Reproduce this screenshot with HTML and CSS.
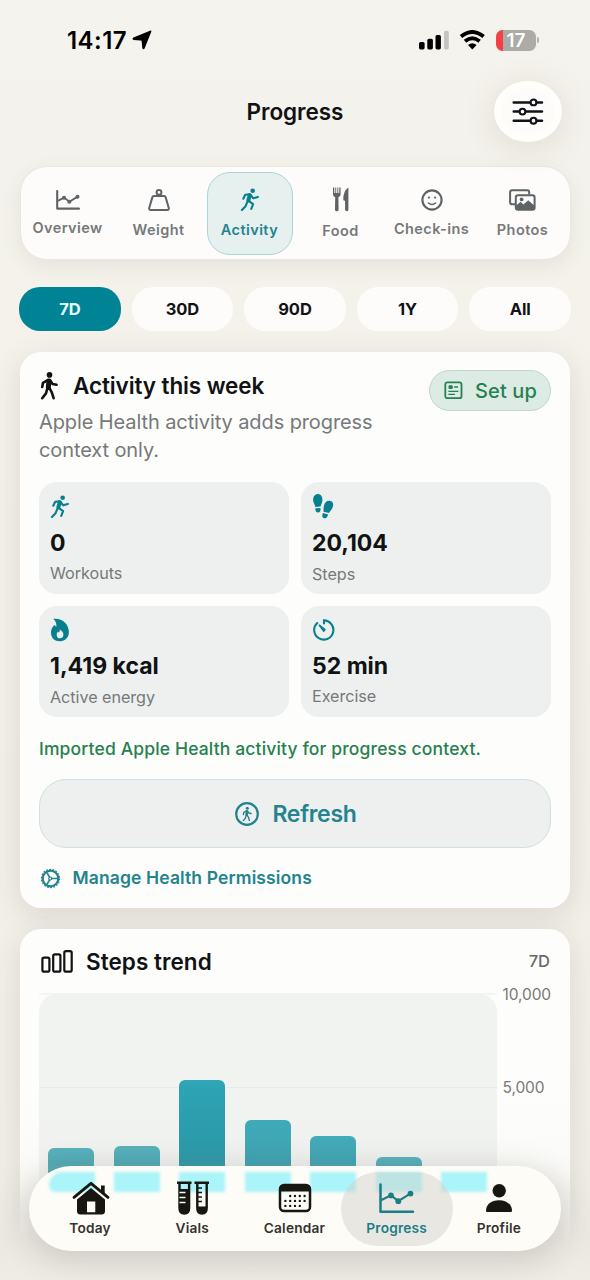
FILE: index.html
```html
<!DOCTYPE html>
<html lang="en">
<head>
<meta charset="utf-8">
<title>Progress</title>
<link rel="stylesheet" href="styles.css">
</head>
<body>
<svg class="defs" width="0" height="0" aria-hidden="true">
  <defs>
    <symbol id="runner" viewBox="0 0 20 24">
      <circle cx="12.8" cy="2.9" r="2.4" fill="currentColor"/>
      <path d="M9.8 7.6L8.2 13" fill="none" stroke="currentColor" stroke-width="4.2" stroke-linecap="round"/>
      <path d="M9.6 6.7L5 7L3 11.2M10.8 7.6L13.4 10.8L18.2 9.3M8.6 13.4L13.2 16.8L11.3 21.9M7 15L5.4 19L1.6 23" fill="none" stroke="currentColor" stroke-width="2.2" stroke-linecap="round" stroke-linejoin="round"/>
    </symbol>
    <symbol id="walker" viewBox="0 0 18 28">
      <circle cx="9.5" cy="2.9" r="2.8" fill="currentColor"/>
      <path d="M9 9L8.4 15" fill="none" stroke="currentColor" stroke-width="5" stroke-linecap="round"/>
      <path d="M8 8L3 10.8L2.2 15M10.4 8.8L12.6 12L16.6 12.8M7.4 16.2L6 21.4L2.2 26.2M9.2 15.6L11.8 20.4L13.6 26.2" fill="none" stroke="currentColor" stroke-width="2.6" stroke-linecap="round" stroke-linejoin="round"/>
    </symbol>
    <symbol id="linechart" viewBox="0 0 24 20">
      <path d="M1.2 1V18.6H23" fill="none" stroke="currentColor" stroke-width="2.1" stroke-linecap="round" stroke-linejoin="round"/>
      <path d="M1.6 11L8 7.6L13.4 11.7L21.6 6.6" fill="none" stroke="currentColor" stroke-width="1.9"/>
      <circle cx="8" cy="7.8" r="2" fill="currentColor"/><circle cx="13.4" cy="11.7" r="2" fill="currentColor"/><circle cx="21.5" cy="6.7" r="2" fill="currentColor"/>
    </symbol>
  </defs>
</svg>
<div class="screen">
  <div class="status">
    <div class="clock"><span>14:17</span>
      <svg width="20" height="20" viewBox="0 0 20 20"><path d="M18 .7Q19.7 .1 19.3 1.8L12.7 18.2Q11.6 20.2 10.3 18.3L9.7 11.4Q9.6 10.5 8.7 10.4L1.6 10Q-.6 9 1.4 7.6Z" fill="#000"/></svg>
    </div>
    <div class="signals">
      <svg width="31" height="20" viewBox="0 0 31 20"><rect x="0" y="12" width="5.6" height="7.4" rx="1.6"/><rect x="8.3" y="8.8" width="5.6" height="10.6" rx="1.6"/><rect x="16.5" y="5" width="5.4" height="14.4" rx="1.6"/><rect x="25" y=".8" width="4.8" height="18.6" rx="1.6" fill="#c5c4be"/></svg>
      <svg class="wifi" width="27" height="20" viewBox="0 0 27 20"><path d="M2 6.6Q13.3 -2.6 24.6 6.6M6 11.3Q13.3 5.3 20.6 11.3" fill="none" stroke="#000" stroke-width="3.9"/><path d="M9 15Q13.3 11.7 17.6 15L13.3 19.4Z"/></svg>
      <div class="battery"><span>17</span></div>
      <i class="battery-cap"></i>
    </div>
  </div>

  <header class="header">
    <h1>Progress</h1>
    <button class="filter" aria-label="Filters">
      <svg width="32" height="27" viewBox="0 0 32 27" fill="none" stroke="#0e1319" stroke-width="2.5" stroke-linecap="round"><path d="M1.7 4.4H18M25 4.4H30M1.7 13.6H7M14 13.6H30M1.7 22.7H18M25 22.7H30"/><circle cx="21.5" cy="4.4" r="2.9" stroke-width="2.1"/><circle cx="10.5" cy="13.6" r="2.9" stroke-width="2.1"/><circle cx="21.5" cy="22.7" r="2.9" stroke-width="2.1"/></svg>
    </button>
  </header>

  <nav class="tabs">
    <div class="tab"><svg class="tab-chart" width="24" height="20"><use href="#linechart"/></svg><span>Overview</span></div>
    <div class="tab weight"><svg width="22" height="22" viewBox="0 0 22 22" fill="none" stroke="currentColor" stroke-width="2" stroke-linejoin="round"><circle cx="11" cy="3.4" r="2.4"/><path d="M4.4 8.1Q4.8 7 6 7H16Q17.2 7 17.6 8.1L20.8 19Q21.1 21 19.3 21H2.7Q.9 21 1.2 19Z"/></svg><span>Weight</span></div>
    <div class="tab active"><svg width="20" height="23"><use href="#runner"/></svg><span>Activity</span></div>
    <div class="tab food"><svg width="18" height="25" viewBox="0 0 18 25" fill="currentColor"><path d="M1 .6V7.2Q1 9.7 3.2 10.3L3 22.4Q3 24.3 4.8 24.3T6.6 22.4L6.4 10.3Q8.6 9.7 8.6 7.2V.6H7.3V6H6.3V.6H5.4V6H4.2V.6H3.3V6H2.3V.6Z"/><path d="M16.4 .6Q11.1 4.2 11.3 12.7Q11.3 13.6 13.1 13.8V22.5Q13.1 24.3 14.8 24.3T16.4 22.5Z"/></svg><span>Food</span></div>
    <div class="tab"><svg width="22" height="22" viewBox="0 0 22 22" fill="none" stroke="currentColor"><circle cx="11" cy="11" r="9.6" stroke-width="2.1"/><path d="M7.4 14Q11 16.8 14.6 14" stroke-width="1.5" stroke-linecap="round"/><circle cx="7.9" cy="8.6" r="1.1" fill="currentColor" stroke="none"/><circle cx="14.1" cy="8.6" r="1.1" fill="currentColor" stroke="none"/></svg><span>Check-ins</span></div>
    <div class="tab photos"><svg width="27" height="22" viewBox="0 0 27 22" fill="none" stroke="currentColor" stroke-width="2"><path d="M6.4 15.3H3.2Q1.1 15.3 1.1 13.2V3.4Q1.1 1.2 3.2 1.2H18.1Q20.2 1.2 20.2 3.4V5.4"/><rect x="6.8" y="6.2" width="18.8" height="14.5" rx="2.3"/><path d="M7.2 16.6L11.6 12.8L14.4 15.5L19.2 11.2L25.2 16.5V20H7.2Z" fill="currentColor" stroke="none"/><circle cx="12.6" cy="10.4" r="1.9" fill="currentColor" stroke="none"/></svg><span>Photos</span></div>
  </nav>

  <div class="ranges">
    <span class="range selected">7D</span><span class="range">30D</span><span class="range">90D</span><span class="range">1Y</span><span class="range">All</span>
  </div>

  <section class="card activity">
    <div class="card-head">
      <div>
        <h2><svg width="18" height="28"><use href="#walker"/></svg><span>Activity this week</span></h2>
        <p class="lead">Apple Health activity adds progress<br>context only.</p>
      </div>
      <button class="setup"><svg width="19" height="19" viewBox="0 0 19 19" fill="none" stroke="currentColor"><rect x="1.3" y="1.4" width="16.2" height="15.8" rx="2" stroke-width="1.8"/><path d="M10.2 6H14M4.4 10.3H14.4M4.4 13.4H11" stroke-width="1.3"/><rect x="4.5" y="4.2" width="4.3" height="3.8" rx="1.2" fill="currentColor" stroke="none"/></svg><span>Set up</span></button>
    </div>
    <div class="tiles">
      <div class="tile"><svg width="20" height="23"><use href="#runner"/></svg><b>0</b><small>Workouts</small></div>
      <div class="tile steps"><svg width="22" height="25" viewBox="0 0 22 25" fill="currentColor"><path d="M5.6 .1C8.6-.1 10.6 2.5 10.4 6.2C10.3 8.6 9.3 9.8 8.6 12.6L3.3 12.9C2.9 10.2 1.2 8.7 1.1 5.9C1 2.7 2.9.4 5.6.1Z"/><path d="M3.3 14.3L8.4 14Q9.1 18.3 6 18.5Q3.2 18.5 3.3 14.3Z"/><path d="M18.6 7C15.4 6 13 8.1 12 11.4C11.3 14 11.7 15.6 11.5 17.7L16.9 19.1C17.8 17.2 19.9 15.6 20.8 13C21.6 10 21 7.7 18.6 7Z"/><path d="M10.9 19L16.2 20.4Q14.7 24.8 12 24.2Q9.2 23.2 10.9 19Z"/></svg><b>20,104</b><small>Steps</small></div>
      <div class="tile energy"><svg width="20" height="24" viewBox="0 0 20 24"><path d="M3.3 .9C12.3-.2 18.8 6.1 18.9 14.1C18.9 19.6 15.4 23.2 10 23.2S1 19.8 1 14.7C1 11.8 2.1 9.3 4.3 7L6.2 8.8C6.9 6 5.7 2.8 3.3.9Z" fill="currentColor"/><path d="M9.7 11.5C12.3 12.9 13.6 14.7 13.4 17.1C13.2 19.2 11.8 20.3 9.9 20.3S6.7 18.9 6.7 16.9C6.7 15.5 7.2 14.5 8 13.6L9 14.8Q9.9 13.4 9.7 11.5Z" fill="#edf0ee"/></svg><b>1,419 kcal</b><small>Active energy</small></div>
      <div class="tile exercise"><svg width="24" height="22" viewBox="0 0 24 22" fill="none" stroke="currentColor" stroke-width="2.1" stroke-linecap="round"><path d="M12 4.4V1.4A9.6 9.6 0 1 1 5.2 4"/><path d="M7.4 6.2L13 10.7L11.6 12.1Z" stroke-width="1.5" fill="currentColor" stroke-linejoin="round"/></svg><b>52 min</b><small>Exercise</small></div>
    </div>
    <p class="note">Imported Apple Health activity for progress context.</p>
    <button class="refresh"><svg width="24" height="24" viewBox="0 0 24 24"><circle cx="12" cy="12" r="10.8" fill="none" stroke="currentColor" stroke-width="2.2"/><use href="#walker" x="7" y="4.6" width="10" height="15"/></svg><span>Refresh</span></button>
    <a class="manage"><svg width="21" height="21" viewBox="0 0 21 21" fill="none" stroke="currentColor"><circle cx="10.5" cy="10.5" r="7.8" stroke-width="2.2"/><circle cx="10.5" cy="10.5" r="9.1" stroke-width="1.1" stroke-dasharray="1.8 1.38"/><path d="M10.5 10.5H18M6.8 4.5L10.5 10.5L6.8 16.5" stroke-width="1.6"/><circle cx="10.2" cy="10.5" r="1.5" fill="#fdfcfb" stroke-width="1.2"/></svg><span>Manage Health Permissions</span></a>
  </section>

  <section class="card trend">
    <div class="trend-head">
      <h2><svg width="32" height="23" viewBox="0 0 32 23" fill="none" stroke="#101214" stroke-width="2.2"><rect x="1.4" y="7.6" width="7" height="14" rx="1.7"/><rect x="12.2" y="4.3" width="7.2" height="17.3" rx="1.7"/><rect x="23.3" y="1.1" width="7.4" height="20.5" rx="1.7"/></svg><span>Steps trend</span></h2>
      <span class="period">7D</span>
    </div>
    <div class="chart">
      <div class="plot">
        <i class="bar" style="height:32px"></i><i class="bar" style="height:34px"></i><i class="bar tall" style="height:100px"></i><i class="bar mid" style="height:60px"></i><i class="bar mid" style="height:44px"></i><i class="bar" style="height:23px"></i><i class="bar" style="height:0"></i>
      </div>
      <div class="axis"><span>10,000</span><span>5,000</span></div>
    </div>
  </section>

  <div class="fade"></div>
  <nav class="dock">
    <div class="glints"><i></i><i></i><i></i><i></i><i></i><i></i><i></i></div>
    <div class="dock-items">
      <div class="dock-item"><svg width="38" height="34" viewBox="0 0 38 34"><path d="M2 16.4L19 2.3L36 16.4" fill="none" stroke="#171611" stroke-width="2.8" stroke-linecap="round" stroke-linejoin="round"/><path d="M29 4.6H32.7V13L29 9.7ZM19 7L33 18.5V30Q33 33.5 29.5 33.5H8.5Q5 33.5 5 30V18.5ZM15 20.5V31.3H23.3V20.5Z" fill="#171611" fill-rule="evenodd"/></svg><span>Today</span></div>
      <div class="dock-item vials"><svg width="34" height="34" viewBox="0 0 34 34"><path d="M1 1.7H15.5M18.5 1.7H33M3.5 1.5V27Q3.5 32.5 8.3 32.5T13.1 27V1.5M21.3 1.5V27Q21.3 32.5 26 32.5T30.7 27V1.5" fill="none" stroke="#171611" stroke-width="2.4"/><path d="M3 8H13V28Q12 32 8 32Q3 31 3 27ZM21 25.5H31V28Q30 32 26 32Q21 31 21 27Z" fill="#171611"/><path d="M3.5 11.5H9.5M3.5 16.5H9.5M3.5 21.5H9.5" stroke="#fdfbf5" stroke-width="1.6"/><path d="M21 7H26M21 11.5H26M21 16H26M21 20.5H26" stroke="#171611" stroke-width="1.7"/></svg><span>Vials</span></div>
      <div class="dock-item calendar"><svg width="34" height="30" viewBox="0 0 34 30"><rect x="2" y="2" width="30" height="26" rx="4" fill="none" stroke="#171611" stroke-width="2.5"/><path d="M2 8.6V5Q2 2 5 2H29Q32 2 32 5V8.6Z" fill="#171611"/><g fill="none" stroke="#171611" stroke-width="2.4" stroke-linecap="round" stroke-dasharray="0 4.8"><path d="M12.2 13H27M7.4 17.9H27M7.4 22.9H22"/></g></svg><span>Calendar</span></div>
      <div class="dock-item current"><svg width="36" height="31" viewBox="0 0 36 31"><path d="M1.5 1.5V28.7H34" fill="none" stroke="currentColor" stroke-width="2.5" stroke-linecap="round" stroke-linejoin="round"/><path d="M2 17.3L12 12.2L19.2 18.1L31.3 10.6" fill="none" stroke="currentColor" stroke-width="2.2"/><circle cx="12" cy="12.4" r="2.9" fill="currentColor"/><circle cx="19.3" cy="18.2" r="2.9" fill="currentColor"/><circle cx="31.5" cy="10.6" r="2.9" fill="currentColor"/></svg><span>Progress</span></div>
      <div class="dock-item"><svg width="28" height="30" viewBox="0 0 28 30" fill="#171611"><circle cx="14.2" cy="7.7" r="6.7"/><path d="M1 27.7C1 21.7 6 17.2 14 17.2S27 21.7 27 27.7Q27 29 25.7 29H2.3Q1 29 1 27.7Z"/></svg><span>Profile</span></div>
    </div>
  </nav>
</div>
</body>
</html>
```
FILE: styles.css
```css
* { box-sizing: border-box; }
body { margin: 0; font-family: Inter, "Noto Sans", sans-serif; color: #101214; background: #f3f1eb; }
h1, h2, p { margin: 0; }
button { font: inherit; border: 0; padding: 0; }
svg { display: block; flex: none; }
.defs { position: absolute; }
.screen { position: relative; width: 590px; height: 1280px; overflow: hidden; background: linear-gradient(#f5f3ed, #f4f2ec 12%, #f4f1ea 45%, #f1eee7); }

.status { height: 80px; padding: 0 51px 0 67px; display: flex; justify-content: space-between; align-items: center; }
.clock { display: flex; align-items: center; gap: 5px; color: #000; font-size: 24px; font-weight: 600; letter-spacing: .45px; line-height: 30px; padding-top: 2px; }
.clock svg { margin-top: -2px; }
.signals { display: flex; align-items: center; }
.wifi { margin: -1px 10px 0 9px; }
.battery { width: 40px; height: 21px; border-radius: 6.5px; background: linear-gradient(90deg, #f43f45 7px, #acaba7 7px); color: #fff; font-size: 19px; font-weight: 600; line-height: 21px; text-align: center; }
.battery-cap { width: 2px; height: 6px; margin-left: 1px; border-radius: 0 3px 3px 0; background: #b1b0ac; }

.header { height: 86px; padding: 0 28px; display: grid; grid-template-columns: 68px 1fr 68px; align-items: start; }
.header h1 { grid-column: 2; text-align: center; font-size: 22.5px; font-weight: 600; line-height: 30px; padding-top: 17px; letter-spacing: -.05px; }
.filter { width: 68px; height: 61px; margin-top: 1px; border-radius: 34px / 30.5px; background: #fdfcfb; border: 7px solid #fffefb; display: grid; place-items: center; box-shadow: 0 5px 28px 5px rgba(104, 91, 67, .1); }

.tabs { height: 94px; margin: 0 19.5px; padding: 4px; border: 1px solid #e9e7e1; border-radius: 27px; background: #fdfcfb; display: grid; grid-template-columns: repeat(6, 1fr); gap: 5px; box-shadow: 0 6px 20px rgba(90, 80, 55, .09); }
.tab { display: flex; flex-direction: column; align-items: center; padding-top: 17px; gap: 8px; color: #5f6365; border: 1px solid transparent; border-radius: 23px; font-size: 14.5px; font-weight: 600; line-height: 20px; letter-spacing: .42px; white-space: nowrap; }
.tab span { color: #76797a; }
.tab-chart { margin: 1px 0 0; }
.tab.weight, .tab.photos, .tab.food { gap: 9px; }
.tab.active { padding-top: 15.5px; gap: 9px; color: #087f8e; background: #e5f0ef; border: 1.5px solid #acd3d5; height: 83px; margin-top: .5px; }
.tab.active span { color: #23838e; }
.tab.food { padding-top: 15px; }

.ranges { margin: 27px 19px 0; display: grid; grid-template-columns: repeat(5, 1fr); gap: 11px; }
.range { height: 44px; border-radius: 21px; background: #fdfcfb; display: flex; align-items: center; justify-content: center; font-size: 16.5px; font-weight: 650; letter-spacing: -.1px; }
.range.selected { background: #008394; color: #e9ffff; }

.card { margin: 0 20px; border-radius: 21px; background: #fdfdfb; box-shadow: 0 8px 28px 2px rgba(72, 69, 53, .12); }
.activity { height: 556px; padding: 18px 19px; margin-top: 21px; }
.card-head { display: flex; justify-content: space-between; height: 112px; }
h2 { display: flex; align-items: center; gap: 15px; font-size: 22.5px; line-height: 30px; font-weight: 600; letter-spacing: -.1px; }
.activity h2 { padding: 1px 0 0 1px; }
.lead { margin-top: 7px; color: #76797a; font-size: 20px; line-height: 28px; letter-spacing: -.1px; white-space: nowrap; }
.setup { width: 122px; height: 41px; border-radius: 21px; border: 1.5px solid #bed9c9; background: #dcebe3; color: #26804f; display: flex; align-items: center; justify-content: center; gap: 12px; font-size: 20px; font-weight: 500; letter-spacing: .1px; }
.setup span { margin-right: -1px; }
.tiles { display: grid; grid-template-columns: 1fr 1fr; grid-template-rows: 112px 111px; gap: 12px; }
.tile { border-radius: 18px; background: #edf0ee; padding: 13px 11px 0; display: flex; flex-direction: column; }
.tile svg { color: #087f8e; }
.tile b { margin-top: 10px; font-size: 23px; line-height: 30px; font-weight: 650; }
.tile small { margin-top: 5px; font-size: 16.2px; line-height: 20px; color: #76797a; letter-spacing: -.05px; }
.steps { padding-top: 12px; }
.steps b { margin-top: 9px; }
.steps small { margin-top: 6px; }
.energy { padding-top: 12px; }
.energy b { margin-top: 9px; }
.energy small { margin-top: 6px; }
.exercise b { margin-top: 10px; }
.note { margin-top: 20px; color: #26804f; font-size: 17.5px; line-height: 24px; font-weight: 500; letter-spacing: .15px; white-space: nowrap; }
.refresh { margin-top: 18px; width: 512px; height: 69px; border: 1.5px solid #d0e0e2; border-radius: 27px; background: #edf0ee; color: #23838e; display: flex; align-items: center; justify-content: center; gap: 13px; font-size: 23px; font-weight: 600; letter-spacing: -.3px; padding-left: 2px; }
.manage { margin-top: 18px; display: flex; align-items: center; gap: 12px; color: #23838e; font-size: 17.5px; font-weight: 600; line-height: 24px; letter-spacing: .13px; padding-left: .5px; }

.trend { margin-top: 21px; height: 330px; padding: 17px 19px; }
.trend-head { display: flex; justify-content: space-between; align-items: center; height: 31px; }
.trend-head h2 { gap: 13.5px; padding-left: 1.5px; letter-spacing: .05px; }
.period { font-size: 16.5px; color: #676a6b; font-weight: 500; padding-right: 1px; margin-top: -1px; }
.chart { margin-top: 16px; display: flex; background: linear-gradient(#f2f3f1, #f2f3f1) no-repeat 0 0 / 458px 1.5px; }
.plot { width: 458px; height: 187px; border-radius: 20px 20px 0 0; background: linear-gradient(transparent 94px, #e9ebe9 94px 95px, transparent 95px), #f1f3f1; display: flex; align-items: flex-end; justify-content: space-between; padding: 0 9.5px 0 9px; }
.bar { width: 46px; border-radius: 6px 6px 0 0; background: linear-gradient(#49acb9, #2f96a4); }
.bar.tall { background: linear-gradient(#30a6b6, #1a94a5 60%, #188b9c); }
.bar.mid { background: linear-gradient(#35a7b6, #2694a4); }
.axis { margin: -8px 0 0 6px; display: flex; flex-direction: column; gap: 73px; color: #76797a; font-size: 15.5px; line-height: 20px; letter-spacing: -.1px; }

.fade { position: absolute; left: 0; right: 0; bottom: 0; height: 190px; background: linear-gradient(transparent, rgba(235, 233, 228, .12) 38%, rgba(235, 232, 226, .5) 58%, rgba(235, 232, 226, .96) 78%, #efece6); }
.dock { position: absolute; left: 29px; top: 1166px; width: 532px; height: 85px; border-radius: 43px; background: #fdfcf6; box-shadow: 0 6px 30px 4px rgba(68, 65, 60, .18); }
.glints { position: absolute; left: 19.5px; top: 6px; width: 438.5px; display: flex; justify-content: space-between; filter: blur(1.5px); }
.glints i { width: 46px; height: 20px; background: #aaf4fa; }
.glints i:first-child { border-radius: 15px 0 0 7px; }
.dock-items { position: relative; height: 100%; padding: 6px 10px; display: grid; grid-template-columns: repeat(5, 102.2px); }
.dock-item { display: flex; flex-direction: column; align-items: center; height: 74px; padding-top: 9px; font-size: 13.7px; font-weight: 600; color: #35332f; white-space: nowrap; letter-spacing: .2px; }
.dock-item svg { margin-bottom: auto; }
.dock-item span { line-height: 18px; margin-bottom: 9px; }
.dock-item:nth-child(n+3) svg { margin-top: 2px; }
.vials svg, .calendar svg, .dock-item:first-child svg { margin-left: 2px; }
.dock-item.current { color: #1c7d87; margin: 0 -5px; border-radius: 37px; background: rgba(211, 208, 202, .47); }
```
